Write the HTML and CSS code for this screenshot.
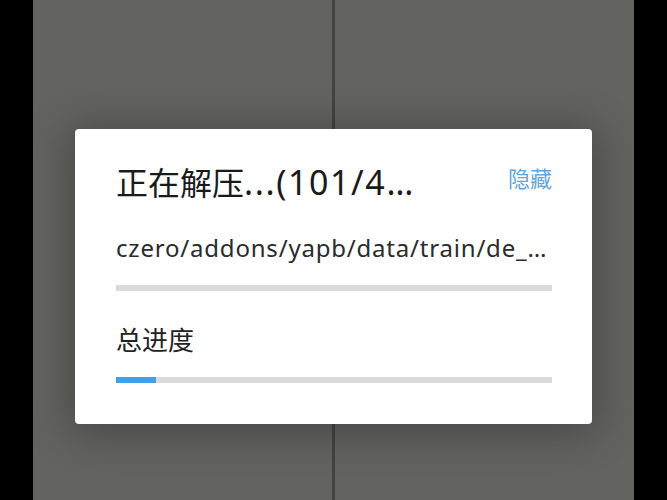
FILE: index.html
```html
<!DOCTYPE html>
<html lang="zh-CN">
<head>
<meta charset="utf-8">
<title>正在解压</title>
<link rel="stylesheet" href="styles.css">
</head>
<body>
<div class="screen">
  <div class="bezel"></div>
  <div class="backdrop">
    <div class="pane"></div>
    <div class="divider"></div>
    <div class="pane"></div>
  </div>
  <div class="bezel"></div>

  <div class="dialog">
    <div class="title-row">
      <div class="title"><span class="cjk">正在解压</span>...(101/4…</div>
      <div class="hide-btn">隐藏</div>
    </div>
    <div class="path">czero/addons/yapb/data/train/de_…</div>
    <div class="bar"><div class="fill" style="width:0%"></div></div>
    <div class="label">总进度</div>
    <div class="bar"><div class="fill" style="width:40px"></div></div>
  </div>
</div>
</body>
</html>
```

FILE: styles.css
```css
html, body {
  margin: 0;
  padding: 0;
  width: 667px;
  height: 500px;
  overflow: hidden;
  background: #000;
}

.screen {
  position: relative;
  display: flex;
  width: 667px;
  height: 500px;
  font-family: "Noto Sans", "Noto Sans CJK SC", sans-serif;
}

.bezel {
  width: 33px;
  flex: none;
  background: #000;
}

.backdrop {
  flex: 1;
  display: flex;
  background: #636362;
}

.pane {
  flex: 1;
  background: #636362;
}

.divider {
  width: 3px;
  flex: none;
  background: #444444;
}

.dialog {
  position: absolute;
  left: 75px;
  top: 129px;
  width: 517px;
  box-sizing: border-box;
  padding: 33px 40px 41px 41px;
  background: #ffffff;
  border-radius: 4px;
  box-shadow: 0 4px 40px 6px rgba(0, 0, 0, 0.28);
  display: flex;
  flex-direction: column;
}

.title-row {
  display: flex;
  justify-content: space-between;
  align-items: flex-start;
  height: 40px;
}

.title {
  font-size: 34px;
  line-height: 40px;
  letter-spacing: 1.6px;
  color: #1a1a1a;
  white-space: nowrap;
}

.cjk {
  font-size: 32px;
  letter-spacing: 0;
}

.hide-btn {
  margin-top: 1px;
  font-size: 22px;
  line-height: 30px;
  color: #5fa7e2;
}

.path {
  margin-top: 31px;
  font-size: 24px;
  line-height: 30px;
  letter-spacing: 0.8px;
  color: #2b2b2b;
  white-space: nowrap;
}

.bar {
  margin-top: 22px;
  height: 6px;
  background: #dbdbdb;
}

.fill {
  height: 100%;
  background: #42a0e8;
}

.label {
  margin-top: 34px;
  font-size: 26px;
  line-height: 30px;
  color: #222222;
}
```
